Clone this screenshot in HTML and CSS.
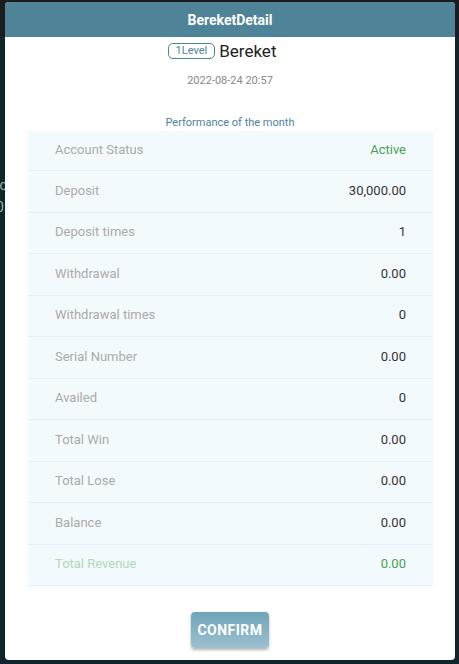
FILE: index.html
```html
<!DOCTYPE html>
<html>
<head>
<meta charset="utf-8">
<link rel="stylesheet" href="styles.css">
</head>
<body>
<div class="backdrop">
  <div class="bg-top"></div>
  <div class="bg-text bg-t1">ic</div>
  <div class="bg-text bg-t2">0</div>
  <div class="modal">
    <div class="modal-header">BereketDetail</div>
    <div class="user-row">
      <span class="level">1Level</span>
      <span class="uname">Bereket</span>
    </div>
    <div class="date">2022-08-24 20:57</div>
    <div class="section-title">Performance of the month</div>
    <div class="table">
      <div class="row"><span class="label">Account Status</span><span class="val green">Active</span></div>
      <div class="row"><span class="label">Deposit</span><span class="val">30,000.00</span></div>
      <div class="row"><span class="label">Deposit times</span><span class="val">1</span></div>
      <div class="row"><span class="label">Withdrawal</span><span class="val">0.00</span></div>
      <div class="row"><span class="label">Withdrawal times</span><span class="val">0</span></div>
      <div class="row"><span class="label">Serial Number</span><span class="val">0.00</span></div>
      <div class="row"><span class="label">Availed</span><span class="val">0</span></div>
      <div class="row"><span class="label">Total Win</span><span class="val">0.00</span></div>
      <div class="row"><span class="label">Total Lose</span><span class="val">0.00</span></div>
      <div class="row"><span class="label">Balance</span><span class="val">0.00</span></div>
      <div class="row"><span class="label lightgreen">Total Revenue</span><span class="val green">0.00</span></div>
    </div>
    <div class="actions">
      <button class="confirm">CONFIRM</button>
    </div>
  </div>
</div>
</body>
</html>
```
FILE: styles.css
```css
html, body {
  margin: 0;
  padding: 0;
  width: 459px;
  height: 664px;
  overflow: hidden;
  font-family: Roboto, "Liberation Sans", Arial, sans-serif;
}
.backdrop {
  position: relative;
  width: 459px;
  height: 664px;
  background: #10242b;
  padding-top: 2px;
  box-sizing: border-box;
}
.bg-top {
  position: absolute;
  left: 0; top: 0;
  width: 459px;
  height: 37px;
  background: #1a1c1d;
}
.bg-text {
  position: absolute;
  left: -4px;
  color: #9fb3ba;
  font-size: 14px;
}
.bg-t1 { top: 177px; }
.bg-t2 { top: 199px; }
.modal {
  position: relative;
  margin-left: 5px;
  width: 450px;
  height: 658px;
  background: #fff;
  border-radius: 4px;
  overflow: hidden;
  display: flex;
  flex-direction: column;
}
.modal-header {
  height: 35px;
  background: #4e8398;
  color: #fff;
  font-weight: 700;
  font-size: 14px;
  display: flex;
  align-items: center;
  justify-content: center;
}
.user-row {
  display: flex;
  justify-content: center;
  align-items: center;
  gap: 4px;
  margin-top: 6px;
  padding-right: 16px;
  height: 16px;
}
.level {
  border: 1px solid #4e8398;
  border-radius: 5px;
  color: #4e8398;
  font-size: 11px;
  line-height: 14px;
  padding: 0 7px;
}
.uname {
  font-size: 17px;
  color: #222;
}
.date {
  text-align: center;
  font-size: 11px;
  color: #888;
  margin-top: 15px;
  line-height: 14px;
}
.section-title {
  text-align: center;
  font-size: 11px;
  color: #4e8398;
  margin-top: 28px;
  line-height: 14px;
}
.table {
  margin: 1px 22px 0 23px;
  background: #f3fafe;
}
.row {
  height: 41.5px;
  box-sizing: border-box;
  border-bottom: 1px solid #e3eff5;
  display: flex;
  align-items: center;
  justify-content: space-between;
  padding: 0 27px 2px 27px;
  font-size: 13px;
}
.row:first-child { height: 40px; }
.label { color: #aaa; }
.val { color: #333; }
.green { color: #4aa04e; }
.lightgreen { color: #b0d9b5; }
.actions {
  display: flex;
  justify-content: center;
  margin-top: 26px;
}
.confirm {
  width: 78px;
  height: 36px;
  border: none;
  border-radius: 4px;
  background: linear-gradient(#6ea4b9, #9dc0cf);
  color: #fff;
  font-family: Roboto, "Liberation Sans", Arial, sans-serif;
  font-weight: 700;
  font-size: 14px;
  letter-spacing: 0.5px;
  box-shadow: 0 2px 3px rgba(0,0,0,0.3);
  padding: 0;
}
```
